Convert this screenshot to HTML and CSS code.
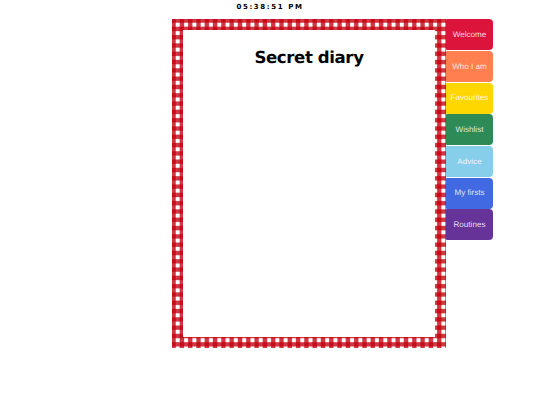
FILE: index.html
```html
<!DOCTYPE html>
<html lang="en">
<head>
<meta charset="utf-8">
<title>Secret diary</title>
<link rel="stylesheet" href="styles.css">
</head>
<body>
<div class="clock">05:38:51 PM</div>
<div class="book">
  <main class="frame">
    <div class="page"><h1 class="title">Secret diary</h1></div>
  </main>
  <nav class="tabs">
    <a class="tab welcome">Welcome</a>
    <a class="tab who">Who I am</a>
    <a class="tab fav">Favourites</a>
    <a class="tab wish">Wishlist</a>
    <a class="tab advice">Advice</a>
    <a class="tab firsts">My firsts</a>
    <a class="tab routines">Routines</a>
  </nav>
</div>
</body>
</html>
```
FILE: styles.css
```css
html, body { margin: 0; padding: 0; background: #fff; }
body { width: 540px; height: 405px; overflow: hidden; text-rendering: geometricPrecision; }
.clock {
  height: 19px;
  padding-top: 2px;
  box-sizing: border-box;
  text-align: center;
  font: bold 7px/10px "DejaVu Sans", sans-serif;
  letter-spacing: 1.6px;
  color: #000;
}
.book { display: flex; align-items: flex-start; padding-left: 172px; }
.frame {
  width: 274px;
  height: 329px;
  box-sizing: border-box;
  padding: 11px;
  background-color: #fff;
  background-image:
    repeating-linear-gradient(90deg, rgba(195,0,15,.78) 0 3.2px, rgba(195,0,15,0) 4.4px 7.1px, rgba(195,0,15,.78) 8.3px),
    repeating-linear-gradient(180deg, rgba(195,0,15,.78) 0 3.2px, rgba(195,0,15,0) 4.4px 7.1px, rgba(195,0,15,.78) 8.3px);
}
.page { height: 100%; background: #fff; text-align: center; }
.title {
  margin: 0;
  padding-top: 17px;
  font: bold 16.6px/21px "DejaVu Sans", sans-serif;
  letter-spacing: -0.4px;
  color: #000;
}
.tabs { display: flex; flex-direction: column; gap: 0.5px; padding-top: 0.3px; }
.tab {
  width: 47px;
  height: 31.15px;
  box-sizing: border-box;
  padding-top: 0.5px;
  display: flex;
  align-items: center;
  justify-content: center;
  border-radius: 1px 4px 4px 1px;
  font: 8.1px/10px "Liberation Sans", Arial, sans-serif;
  color: rgba(255,255,255,.85);
}
.welcome { background: #dc143c; }
.who { background: #ff7f50; }
.fav { background: #ffd700; }
.wish { background: #2e8b57; }
.advice { background: #87ceeb; }
.firsts { background: #4169e1; }
.routines { background: #663399; }
```
